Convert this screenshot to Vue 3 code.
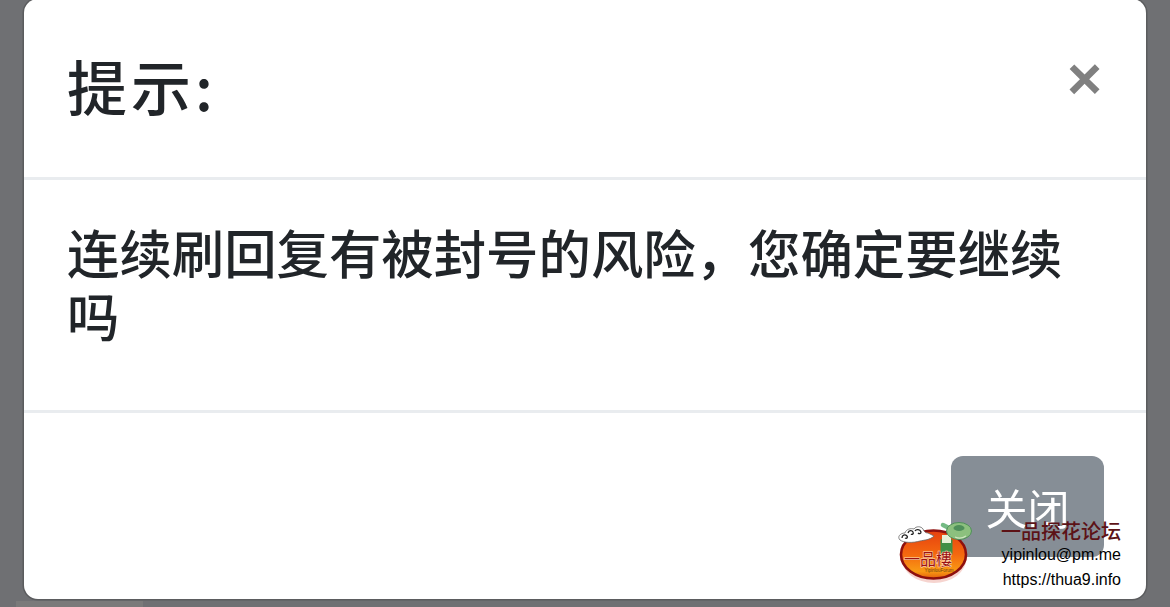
<script setup>
const title = '提示:'
const message = '连续刷回复有被封号的风险\uFF0C您确定要继续吗'
</script>

<template>
  <div class="page">
    <div class="modal">
      <div class="modal-header">
        <h5 class="modal-title">{{ title }}</h5>
        <span class="close">×</span>
      </div>
      <div class="modal-body">{{ message }}</div>
      <div class="modal-footer">
        <button class="btn-close">关闭</button>
      </div>
    </div>

    <div class="watermark">
      <svg class="logo" width="76" height="68" viewBox="0 0 76 68">
        <defs>
          <linearGradient id="ball" x1="0" y1="0" x2="0" y2="1">
            <stop offset="0%" stop-color="#e6400f" />
            <stop offset="50%" stop-color="#f4690f" />
            <stop offset="85%" stop-color="#f99a14" />
            <stop offset="100%" stop-color="#e4600c" />
          </linearGradient>
        </defs>
        <ellipse cx="37" cy="39" rx="32.5" ry="25" fill="#f6d4cf" />
        <ellipse cx="36.5" cy="35.5" rx="32.5" ry="24" fill="url(#ball)" stroke="#8e100e" stroke-width="2.6" />
        <path d="M3 21c-3-3 0-7 5-7 1-4 6-5 9-4 2-3 7-3 9 0 1 3 3 4 5 4l6 3c-4 4-10 4-14 5-7 2-16 2-20-1z" fill="#fff" stroke="#666" stroke-width="0.8" />
        <path d="M5 19c0-3 3-4 5-2 1 1 0 3-2 2M11 14c1-3 4-3 5-1 1 2-1 3-2 2M18 12c1-2 5-2 6 1 0 2-2 2-3 1" fill="none" stroke="#222" stroke-width="1.3" />
        <rect x="43.5" y="20" width="12" height="16" rx="1.5" fill="#3f8f45" />
        <rect x="45" y="16" width="9" height="8" fill="#e6f0d6" />
        <path d="M46 6l10 5" stroke="#74bb84" stroke-width="4.5" stroke-linecap="round" />
        <ellipse cx="62" cy="12" rx="12.5" ry="8.5" fill="#8cc07e" stroke="#4f8f5a" />
        <ellipse cx="62" cy="9" rx="5.5" ry="3" fill="#4f8f5a" />
        <path d="M58 18c4 2 8 1 11-1" fill="none" stroke="#cfe6c0" stroke-width="1.2" />
        <text x="7" y="46" class="logo-name">一品樓</text>
        <text x="42" y="53" class="logo-sub" text-anchor="middle">YipinlouForum</text>
      </svg>
      <div class="watermark-text">
        <div class="forum-name">一品探花论坛</div>
        <div class="forum-line">yipinlou@pm.me</div>
        <div class="forum-line">https://thua9.info</div>
      </div>
    </div>

    <div class="page-bottom"></div>
  </div>
</template>

<style>
html, body {
  margin: 0;
  background: #6f7073;
}
</style>

<style scoped>
.page {
  position: relative;
  width: 1170px;
  height: 607px;
  overflow: hidden;
  box-sizing: border-box;
  padding: 0 24px;
  background: #6f7073;
  font-family: "Noto Sans CJK SC", "Noto Sans", sans-serif;
}

.modal {
  width: 1122px;
  height: 600px;
  margin-top: -1px;
  display: flex;
  flex-direction: column;
  background: #fff;
  border-radius: 14px;
  box-shadow: 0 0 0 1.5px #5b5c5e;
  color: #212529;
  filter: blur(0.3px);
}

.modal-header {
  height: 181px;
  flex: none;
  box-sizing: border-box;
  padding: 0 44px 6px 43px;
  display: flex;
  align-items: center;
  justify-content: space-between;
  border-bottom: 3px solid #e9ecef;
}

.modal-title {
  margin: 0;
  font-size: 60px;
  font-weight: 500;
  letter-spacing: 4px;
  line-height: 1.2;
}

.close {
  font-family: "Liberation Sans", sans-serif;
  font-size: 60px;
  font-weight: 700;
  line-height: 1;
  color: #808080;
  margin-right: 0;
  margin-bottom: 13px;
}

.modal-body {
  height: 233px;
  flex: none;
  box-sizing: border-box;
  padding: 40px 44px 0 43px;
  font-size: 52.4px;
  font-weight: 500;
  line-height: 63px;
  border-bottom: 3px solid #e9ecef;
}

.modal-footer {
  flex: 1;
  box-sizing: border-box;
  padding: 43px 42px 0;
  display: flex;
  justify-content: flex-end;
  align-items: flex-start;
}

.btn-close {
  width: 153px;
  height: 101px;
  border: none;
  border-radius: 12px;
  background: #868e96;
  color: #fff;
  font-family: inherit;
  font-size: 42px;
  font-weight: 400;
  padding: 0;
}

.watermark {
  position: absolute;
  left: 897px;
  top: 519px;
  width: 224px;
  display: flex;
  justify-content: space-between;
}

.logo-name {
  font-size: 16px;
  fill: #9c1212;
  stroke: #ffe2c4;
  stroke-width: 1px;
  paint-order: stroke;
  font-family: "Noto Sans CJK TC", sans-serif;
}

.logo-sub {
  font-size: 4.5px;
  fill: #6a3a10;
  font-family: "Liberation Sans", sans-serif;
}

.watermark-text {
  text-align: right;
  font-family: "Liberation Sans", "Noto Sans CJK SC", sans-serif;
  color: #000;
}

.forum-name {
  font-family: "Noto Sans CJK SC", sans-serif;
  font-size: 20px;
  line-height: 23px;
  font-weight: 500;
  color: #5c1216;
}

.forum-line {
  font-size: 16px;
  line-height: 25px;
}

.page-bottom {
  position: absolute;
  left: 16px;
  top: 601px;
  width: 127px;
  height: 6px;
  background: #7a7a7a;
}
</style>
